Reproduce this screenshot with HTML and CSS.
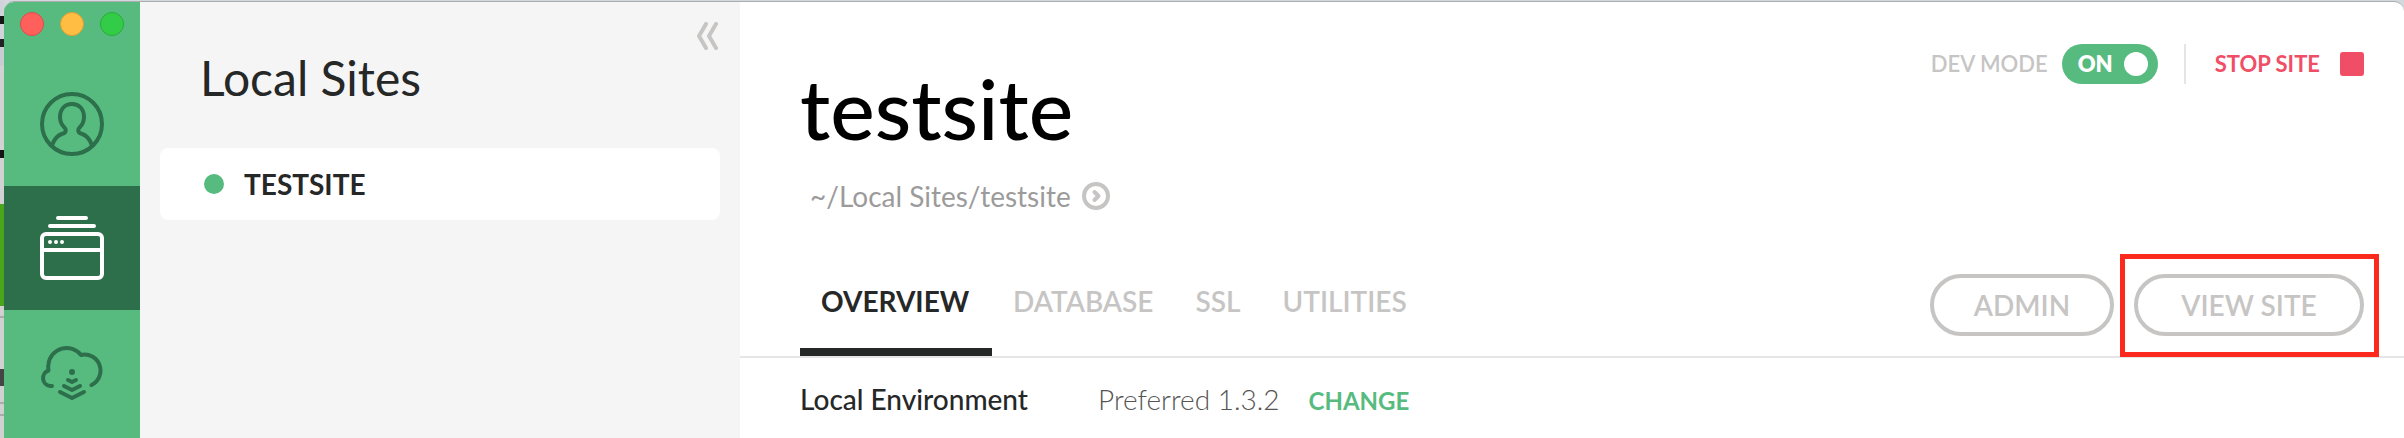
FILE: index.html
```html
<!DOCTYPE html>
<html lang="en">
<head>
<meta charset="utf-8">
<title>Local Sites</title>
<link rel="stylesheet" href="styles.css">
</head>
<body>
<div class="desktop">
  <div class="backdrop" aria-hidden="true"></div>
  <div class="window">
    <nav class="rail" aria-label="Main">
      <div class="lights">
        <button class="light light-close" aria-label="Close"></button>
        <button class="light light-min" aria-label="Minimize"></button>
        <button class="light light-max" aria-label="Zoom"></button>
      </div>
      <button class="rail-item" aria-label="Account">
        <svg class="rail-icon" viewBox="0 0 64 64"><circle cx="32" cy="32" r="30"/><path d="M12 53.500C14 47 18 43 23 41.500C26.500 40.500 26.500 37 24 35C21 32 20 29 20 25C20 17 25 12 32 12C39 12 44 17 44 25C44 29 43 32 40 35C37.500 37 37.500 40.500 41 41.500C46 43 50 47 52 53.500"/></svg>
      </button>
      <button class="rail-item is-active" aria-label="Local sites">
        <svg class="rail-icon" viewBox="0 0 64 64"><path d="M18 2H46M10 10H54M2 34H62"/><rect x="2" y="18" width="60" height="44" rx="4"/><g class="fill"><circle cx="10" cy="26" r="2"/><circle cx="16" cy="26" r="2"/><circle cx="22" cy="26" r="2"/></g></svg>
      </button>
      <button class="rail-item" aria-label="Cloud">
        <svg class="rail-icon" viewBox="0 0 64 64"><path d="M12 46H10A8 8 0 0 1 8.500 30.500C8 28 8 26 8.500 24A18.200 18.200 0 0 1 41 15A16 16 0 0 1 51.500 45"/><path d="M28 40L32 42L36 40M24 46L32 50L40 46M20 52L32 58L44 52"/><circle class="fill" cx="32" cy="32" r="3"/></svg>
      </button>
    </nav>

    <aside class="sidebar">
      <div class="sidebar-head">
        <h2 class="sidebar-title">Local Sites</h2>
        <button class="collapse" aria-label="Collapse sidebar">
          <svg class="collapse-icon" viewBox="0 0 24 28"><path d="M10 2L3 14L10 26M20 2L13 14L20 26"/></svg>
        </button>
      </div>
      <button class="site"><span class="site-dot"></span>TESTSITE</button>
    </aside>

    <main class="main">
      <header class="header">
        <div class="heading">
          <h1 class="title">testsite</h1>
          <a class="path" href="#">~/Local Sites/testsite
            <svg class="path-icon" viewBox="0 0 28 28"><circle cx="14" cy="14" r="12"/><path d="M12.500 10L16.500 14L12.500 18"/></svg>
          </a>
        </div>
        <div class="controls">
          <span class="dev-label" id="dev-label">DEV MODE</span>
          <button class="toggle" role="switch" aria-checked="true" aria-labelledby="dev-label">ON<span class="knob"></span></button>
          <span class="divider"></span>
          <button class="stop">STOP SITE<span class="stop-square"></span></button>
        </div>
      </header>

      <div class="bar">
        <nav class="tabs" aria-label="Site">
          <a class="tab is-current" href="#">OVERVIEW</a>
          <a class="tab" href="#">DATABASE</a>
          <a class="tab" href="#">SSL</a>
          <a class="tab" href="#">UTILITIES</a>
        </nav>
        <div class="actions">
          <button class="pill">ADMIN</button>
          <div class="marked"><button class="pill pill-wide">VIEW SITE</button></div>
        </div>
      </div>

      <div class="info">
        <span class="info-label">Local Environment</span>
        <span class="info-value">Preferred 1.3.2</span>
        <button class="change">CHANGE</button>
      </div>
    </main>
  </div>
</div>
</body>
</html>
```
FILE: styles.css
```css
* { box-sizing: border-box; }

body {
  margin: 0;
  font-family: Lato, "Liberation Sans", sans-serif;
  font-size: 28px;
  line-height: 32px;
  color: #262727;
}

h1, h2 { margin: 0; }

a { color: inherit; text-decoration: none; }

button {
  margin: 0;
  padding: 0;
  border: 0;
  background: none;
  color: inherit;
  font: inherit;
  cursor: pointer;
}

svg {
  display: block;
  fill: none;
  stroke: currentColor;
  stroke-width: 4;
  stroke-linecap: round;
  stroke-linejoin: round;
}

.desktop {
  display: flex;
  min-height: 100vh;
  padding-top: 1px;
  background: #d3d8dc;
}

/* Sliver of the page that lies behind the window */
.backdrop {
  flex: 0 0 4px;
  background: linear-gradient(
    #d0d4da 15px, #151515 15px 23px, #d0d4da 23px 38px, #222 38px 46px,
    #c9cdd3 46px 65px, #d2d2d2 65px 149px, #151515 149px 157px,
    #d2d2d2 157px 203px, #4aa51c 203px 305px, #d0d0d0 305px 315px,
    #aaa 315px 317px, #d0d0d0 317px 368px, #444 368px 385px,
    #d0d0d0 385px 401px, #aaa 401px 403px, #d0d0d0 403px 413px,
    #aaa 413px 415px, #d0d0d0 415px);
}

.window {
  display: flex;
  flex: 1;
  min-width: 0;
  overflow: hidden;
  border-top: 1px solid #a9adb0;
  border-radius: 10px 10px 0 0;
  background: #fff;
}

/* Icon rail */
.rail {
  flex: 0 0 136px;
  padding-top: 10px;
  background: #57bb80;
  color: #2c6f4a;
}

.lights {
  display: flex;
  justify-content: center;
  gap: 16px;
  padding-bottom: 26px;
}

.light {
  width: 24px;
  height: 24px;
  border: 1px solid;
  border-radius: 50%;
}

.light-close { background: #ff605c; border-color: #df4a45; }
.light-min { background: #ffbd44; border-color: #dfa034; }
.light-max { background: #33cc48; border-color: #27ab35; }

.rail-item {
  display: flex;
  align-items: center;
  justify-content: center;
  width: 100%;
  height: 124px;
}

.rail-item.is-active { background: #2c6f4a; color: #fff; }

.rail-icon { width: 64px; height: 64px; }

.fill { fill: currentColor; stroke: none; }

/* Site list */
.sidebar {
  flex: 0 0 600px;
  padding: 0 20px;
  background: #f5f5f5;
}

.sidebar-head {
  display: flex;
  align-items: flex-start;
  justify-content: space-between;
  padding: 20px 0 42px 40px;
}

.sidebar-title {
  padding-top: 28px;
  font-size: 48px;
  line-height: 56px;
  font-weight: 400;
}

.collapse { color: #c6c5c4; }

.collapse-icon { width: 24px; height: 28px; }

.site {
  display: flex;
  align-items: center;
  gap: 20px;
  width: 100%;
  height: 72px;
  padding: 0 44px;
  border-radius: 8px;
  background: #fff;
  font-weight: 700;
}

.site-dot {
  width: 20px;
  height: 20px;
  border-radius: 50%;
  background: #57bb80;
}

/* Site details */
.main { flex: 1; min-width: 0; }

.header {
  display: flex;
  align-items: flex-start;
  justify-content: space-between;
  padding: 42px 40px 0 60px;
}

.heading { padding-top: 22px; }

.title {
  font-size: 84px;
  line-height: 84px;
  font-weight: 500;
  color: #000;
}

.path {
  display: flex;
  align-items: center;
  gap: 11px;
  margin-top: 30px;
  padding-left: 10px;
  color: #9c9b9b;
}

.path-icon { width: 28px; height: 28px; color: #c6c5c4; }

.controls {
  display: flex;
  align-items: center;
  font-size: 22px;
  line-height: 24px;
}

.dev-label {
  margin-right: 14px;
  font-weight: 600;
  color: #c6c5c4;
}

.toggle {
  display: flex;
  align-items: center;
  justify-content: space-between;
  width: 96px;
  height: 40px;
  padding: 0 10px 0 16px;
  border-radius: 20px;
  background: #57bb80;
  color: #fff;
  font-weight: 800;
}

.knob {
  width: 24px;
  height: 24px;
  border-radius: 50%;
  background: #fff;
}

.divider {
  width: 2px;
  height: 40px;
  margin: 0 29px 0 26px;
  background: #e5e5e5;
}

.stop {
  display: flex;
  align-items: center;
  gap: 20px;
  color: #f04e66;
  font-weight: 700;
}

.stop-square {
  width: 24px;
  height: 24px;
  border-radius: 3px;
  background: #f04e66;
}

.bar {
  display: flex;
  align-items: flex-end;
  justify-content: space-between;
  padding: 62px 40px 0 60px;
  border-bottom: 2px solid #e6e6e6;
}

.tabs { display: flex; }

.tab {
  padding: 0 21px 31px;
  border-bottom: 8px solid transparent;
  font-weight: 600;
  color: #c6c5c4;
}

.tab.is-current {
  min-width: 192px;
  border-color: #262727;
  color: #262727;
  font-weight: 700;
}

.actions {
  display: flex;
  gap: 20px;
  padding-bottom: 20px;
}

.pill {
  min-width: 184px;
  height: 62px;
  border: 4px solid #c6c5c4;
  border-radius: 31px;
  color: #c6c5c4;
  font-weight: 600;
}

.pill-wide { min-width: 230px; }

.marked { position: relative; display: flex; }

/* Red frame over the button */
.marked::after {
  content: "";
  position: absolute;
  inset: -20px -15px -21px -14px;
  border: 5px solid #fb2a1d;
  pointer-events: none;
}

.info {
  display: flex;
  align-items: baseline;
  padding: 25px 40px 20px 60px;
}

.info-label { width: 298px; font-weight: 500; }

.info-value {
  margin-right: 29px;
  font-weight: 300;
  color: #555;
}

.change {
  font-size: 24px;
  font-weight: 700;
  color: #57bb80;
}
```
